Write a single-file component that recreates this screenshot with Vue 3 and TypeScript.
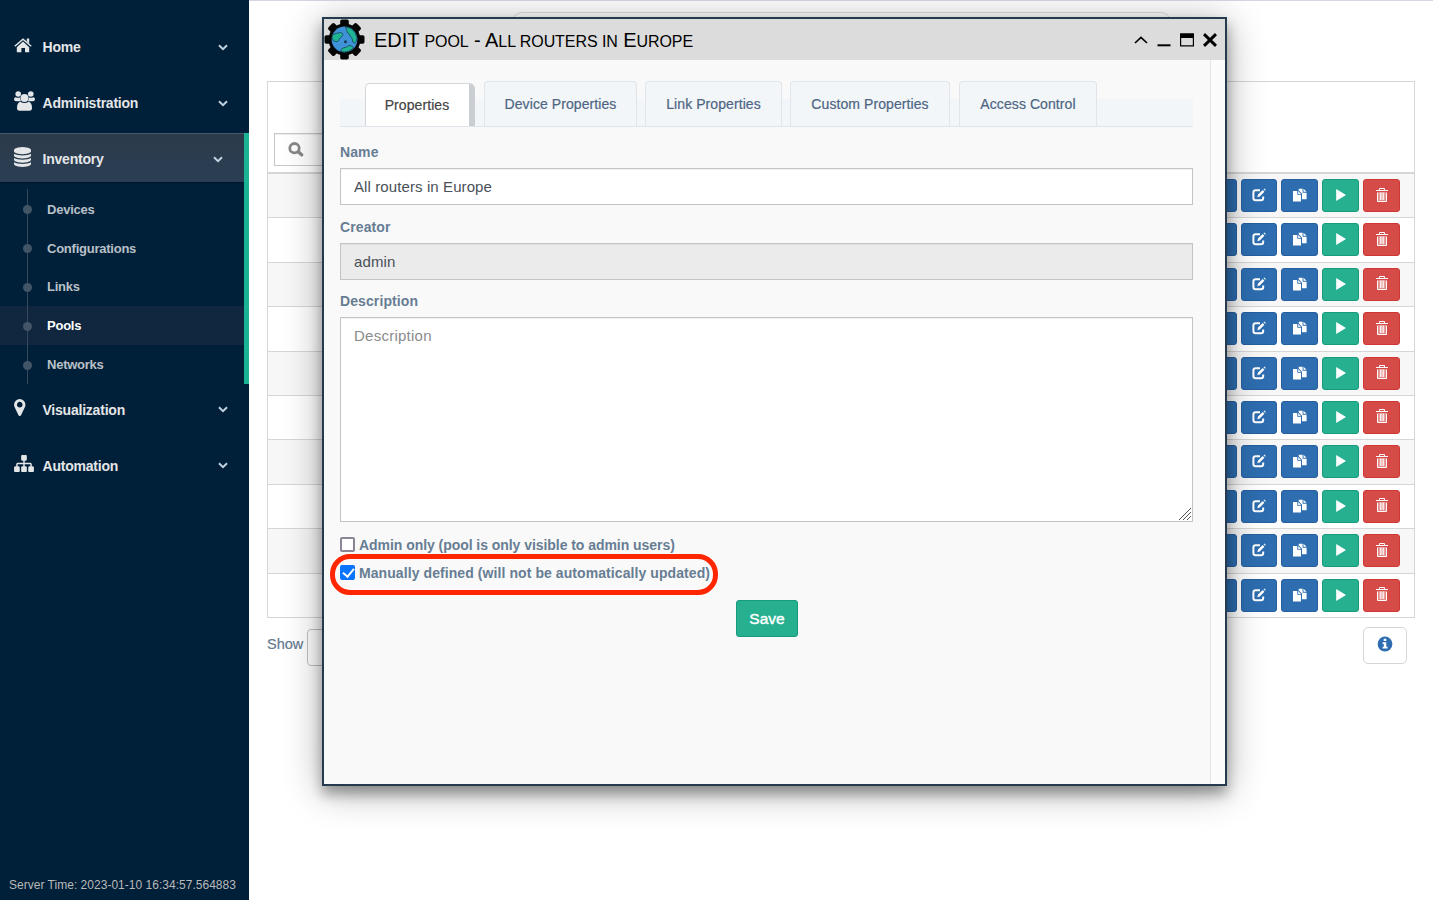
<script setup lang="ts">
import { ref } from 'vue'

interface MenuItem {
  label: string
  icon: string
  children?: string[]
}

const menu: MenuItem[] = [
  { label: 'Home', icon: 'home' },
  { label: 'Administration', icon: 'users' },
  { label: 'Inventory', icon: 'database', children: ['Devices', 'Configurations', 'Links', 'Pools', 'Networks'] },
  { label: 'Visualization', icon: 'marker' },
  { label: 'Automation', icon: 'sitemap' },
]
const activePage = 'Pools'
const tabs = [
  { label: 'Properties', key: 'properties' },
  { label: 'Device Properties', key: 'device' },
  { label: 'Link Properties', key: 'link' },
  { label: 'Custom Properties', key: 'custom' },
  { label: 'Access Control', key: 'access' },
]
const activeTab = ref('properties')
const name = ref('All routers in Europe')
const creator = ref('admin')
const description = ref('')
const adminOnly = ref(false)
const manual = ref(true)
const rows = 10
const teeth = [0, 45, 90, 135, 180, 225, 270, 315]
</script>

<template>
  <div class="page">
    <aside class="sidebar">
      <nav class="menu">
        <div v-for="item in menu" :key="item.label" class="group" :class="{ open: item.children }">
          <div class="item">
            <span class="item-icon">
              <svg v-if="item.icon === 'home'" class="i-home" viewBox="0 0 18 15">
                <path d="M9 3.6 15.2 9.2V14.3H11V10H7.4V14.3H2.8V9.2Z" />
                <path d="M.8 8.2 9 1.2 17.2 8.2" class="stroke" />
                <path d="M12.8.6H15.2V5.4L12.8 3.3Z" />
              </svg>
              <svg v-else-if="item.icon === 'users'" class="i-users" viewBox="0 0 21 20">
                <circle cx="4.2" cy="3" r="2.8" />
                <circle cx="16.8" cy="3" r="2.8" />
                <path d="M1.7 6.2Q4 7.4 6.2 6.3 5.7 8.8 7 10.2H2.2Q0 10.2 0 8.3 0 6.2 1.7 6.2ZM19.3 6.2Q17 7.4 14.8 6.3 15.3 8.8 14 10.2H18.8Q21 10.2 21 8.3 21 6.2 19.3 6.2Z" />
                <circle cx="10.5" cy="7" r="4" />
                <path d="M6.3 10.8Q10.5 13.2 14.7 10.8 18 11.5 18 17 18 19.8 15.4 19.8H5.6Q3 19.8 3 17 3 11.5 6.3 10.8Z" />
              </svg>
              <svg v-else-if="item.icon === 'database'" class="i-db" viewBox="0 0 1536 1792">
                <path d="M768 768q237 0 443-43t325-127v170q0 69-103 128t-280 93.5-385 34.5-385-34.5-280-93.5-103-128v-170q119 84 325 127t443 43zm0 768q237 0 443-43t325-127v170q0 69-103 128t-280 93.5-385 34.5-385-34.5-280-93.5-103-128v-170q119 84 325 127t443 43zm0-384q237 0 443-43t325-127v170q0 69-103 128t-280 93.5-385 34.5-385-34.5-280-93.5-103-128v-170q119 84 325 127t443 43zm0-1152q208 0 385 34.5t280 93.5 103 128v128q0 69-103 128t-280 93.5-385 34.5-385-34.5-280-93.5-103-128v-128q0-69 103-128t280-93.5 385-34.5z" />
              </svg>
              <svg v-else-if="item.icon === 'marker'" class="i-marker" viewBox="0 128 1024 1536">
                <path d="M768 640q0-106-75-181t-181-75-181 75-75 181 75 181 181 75 181-75 75-181zm256 0q0 109-33 179l-364 774q-16 33-47.5 52t-67.5 19-67.5-19-46.5-52l-365-774q-33-70-33-179 0-212 150-362t362-150 362 150 150 362z" />
              </svg>
              <svg v-else class="i-sitemap" viewBox="0 128 1792 1536">
                <path d="M1792 1248v320q0 40-28 68t-68 28h-320q-40 0-68-28t-28-68v-320q0-40 28-68t68-28h96v-192h-512v192h96q40 0 68 28t28 68v320q0 40-28 68t-68 28h-320q-40 0-68-28t-28-68v-320q0-40 28-68t68-28h96v-192h-512v192h96q40 0 68 28t28 68v320q0 40-28 68t-68 28h-320q-40 0-68-28t-28-68v-320q0-40 28-68t68-28h96v-192q0-52 38-90t90-38h512v-192h-96q-40 0-68-28t-28-68v-320q0-40 28-68t68-28h320q40 0 68 28t28 68v320q0 40-28 68t-68 28h-96v192h512q52 0 90 38t38 90v192h96q40 0 68 28t28 68z" />
              </svg>
            </span>
            <span class="item-label">{{ item.label }}</span>
            <svg class="chev" viewBox="0 0 10 7"><path d="M1 1.2 5 5.1 9 1.2" /></svg>
          </div>
          <ul v-if="item.children" class="children">
            <li v-for="c in item.children" :key="c" :class="{ current: c === activePage }">
              <i class="dot"></i><span>{{ c }}</span>
            </li>
          </ul>
        </div>
      </nav>
      <div class="server-time"><span>Server Time: 2023-01-10 16:34:57.564883</span></div>
    </aside>

    <main class="content">
      <div class="top-box"></div>
      <section class="table">
        <div class="thead">
          <div class="search">
            <svg viewBox="0 0 16 15"><circle cx="6.5" cy="6.2" r="4.7" /><path d="M10.2 9.8 13.6 12.8" /></svg>
          </div>
        </div>
        <div v-for="n in rows" :key="n" class="row" :class="{ odd: n % 2 === 1 }">
          <button class="btn blue"></button>
          <button class="btn blue">
            <svg viewBox="0 0 14 14">
              <path class="line" d="M8 2.3H3.6Q1.4 2.3 1.4 4.5V10Q1.4 12.2 3.6 12.2H9Q11.2 12.2 11.2 10V8.6" />
              <path d="M5.3 9.3 6 6.6 10.7 2 12.4 3.7 7.8 8.5ZM11.5 1.2 12.4.5 13.8 1.9 13.1 2.8Z" />
            </svg>
          </button>
          <button class="btn blue">
            <svg viewBox="0 0 14 14">
              <path d="M0 3H4.3V6.8H8V13.5H0ZM5.2 3 8 5.9H5.2Z" />
              <path d="M5.7.7H9.6V4.7H13.6V11.3H9V5.7L5.7 2.3ZM10.5.7 13.6 3.8H10.5Z" />
            </svg>
          </button>
          <button class="btn green">
            <svg viewBox="0 0 14 14"><path d="M2.2 1 12 7 2.2 13Z" /></svg>
          </button>
          <button class="btn red">
            <svg viewBox="0 0 14 16">
              <path class="soft" d="M3 5H11V14H3Z" />
              <path class="thin" d="M1 3.5H13M4.5 3V1.5H9.5V3M2.5 5.5V14.5H11.5V5.500M5.300 5.500V13M7 5.500V13M8.700 5.500V13" />
            </svg>
          </button>
        </div>
      </section>
      <footer class="tfoot">
        <span class="show">Show</span>
        <div class="page-size"></div>
        <button class="info">
          <svg viewBox="0 0 16 16">
            <circle cx="8" cy="8" r="7.4" />
            <path d="M6.7 2.7H9.3V5H6.7ZM5.6 6.2H9.3V10.8H10.5V12.6H5.6V10.8H6.8V8H5.6Z" />
          </svg>
        </button>
      </footer>
    </main>

    <section class="panel">
      <header class="panel-head">
        <svg class="logo" viewBox="-21 -21 42 42">
          <rect v-for="t in teeth" :key="t" x="-4.4" y="-20.5" width="8.8" height="10" rx="1.8" :transform="`rotate(${t})`" />
          <circle r="16.3" />
          <circle r="13.2" class="ocean" />
          <path class="land" d="M1 -12.6Q7 -12.4 10.500 -7.500L12.900 -1.500Q12 3 10.500 3.800 7.500 3 8 -.5 6 -3.200 4.500 -6 1.800 -7 2.500 -9.300ZM-12 -5Q-8.500 -6.500 -4.500 -7 -1 -7 -1.800 -4.200 -3 -2.500 -5.300 -1 -5.800 3 -9.500 2 -12 2 -12.800 -1.800ZM-3.800 12.200Q-3.600 9.500 -1.500 8.700 2.500 8.200 4.500 6.200 7.500 5.500 9.300 8.700 5 13 -.5 12.900Z" />
          <circle cx="1" cy="2.3" r="1.6" class="dark" />
        </svg>
        <h1>EDIT <small>pool</small> - A<small>ll routers in</small> E<small>urope</small></h1>
        <div class="controls">
          <svg viewBox="0 0 14 14"><path d="M1 10 7 4.3 13 10" class="c15" /></svg>
          <svg viewBox="0 0 14 14"><path d="M.5 12.3H13.5" class="c2" /></svg>
          <svg viewBox="0 0 14 14"><path d="M.6 1H13.4V12.9H.6Z" class="c1" /><path d="M.3.5H13.7V5H.3Z" class="fill" /></svg>
          <svg viewBox="0 0 14 14"><path d="M1 1.2 13 12.8M13 1.2 1 12.8" class="c3" /></svg>
        </div>
      </header>
      <div class="panel-body">
        <div class="form">
          <div class="tabs">
            <button v-for="t in tabs" :key="t.key" class="tab" :class="[t.key, { active: activeTab === t.key }]" @click="activeTab = t.key">
              <span>{{ t.label }}</span>
            </button>
          </div>
          <label class="lbl first">Name</label>
          <input v-model="name" class="field" type="text" />
          <label class="lbl">Creator</label>
          <input v-model="creator" class="field readonly" type="text" readonly />
          <label class="lbl short">Description</label>
          <div class="area-wrap">
            <textarea v-model="description" class="field area" placeholder="Description"></textarea>
            <svg class="grip" viewBox="0 0 14 14"><path d="M1 13 13 1M5 13 13 5M9 13 13 9" /></svg>
          </div>
          <label class="check"><input v-model="adminOnly" type="checkbox" /><span class="t1">Admin only (pool is only visible to admin users)</span></label>
          <label class="check second"><input v-model="manual" type="checkbox" /><span class="t2">Manually defined (will not be automatically updated)</span><i class="ring"></i></label>
          <button class="save">Save</button>
        </div>
        <div class="gutter"></div>
      </div>
    </section>
  </div>
</template>

<style>
body { margin: 0; overflow: hidden; background: #fff; }
</style>

<style scoped>
* { box-sizing: border-box; }
.page { position: relative; display: flex; width: 1433px; height: 900px; overflow: hidden; font-family: "Liberation Sans", Arial, sans-serif; font-size: 14px; color: #495057; }
button, input, textarea { font-family: inherit; }
svg { display: block; }

.sidebar { width: 249px; height: 900px; background: #001f38; display: flex; flex-direction: column; justify-content: space-between; color: #e4e6e8; }
.menu { padding-top: 21px; }
.group { margin-bottom: 6px; }
.item { display: flex; align-items: center; height: 50px; padding: 2px 21px 0 14px; }
.item-icon { width: 28.5px; height: 22px; display: flex; align-items: center; }
.item-icon svg { fill: #e4e6e8; flex: none; }
.item-icon .stroke { fill: none; stroke: #e4e6e8; stroke-width: 1.5; }
.i-home { width: 18px; height: 15px; margin-top: -4px; }
.i-users { width: 21px; height: 20px; margin-top: -4px; }
.i-db { width: 17px; height: 20px; margin-top: -4px; }
.i-marker { width: 11.5px; height: 17px; margin-top: -4px; }
.i-sitemap { width: 20px; height: 17px; margin-top: -4px; }
.item-label { flex: 1; font-weight: 700; font-size: 14px; letter-spacing: -.22px; white-space: nowrap; }
.chev { width: 10px; height: 7px; margin-right: .5px; }
.chev path { fill: none; stroke: #c3d3e2; stroke-width: 2; }
.open { border-right: 5px solid #1ab394; margin-bottom: 0; }
.open .item { background: linear-gradient(#2c3a4a, #2a3f54); border-top: 1px solid #45576a; border-bottom: 1px solid #00162a; }
.children { list-style: none; margin: 0; padding: 7px 0 0; position: relative; }
.children::before { content: ""; position: absolute; left: 27px; top: 6px; bottom: 0; width: 1px; background: #35495d; }
.children li { display: flex; align-items: center; height: 38.8px; padding-left: 23px; color: #b9c0c8; font-size: 13px; font-weight: 700; letter-spacing: -.24px; }
.children li.current { background: #10273f; color: #fff; }
.dot { position: relative; width: 9px; height: 9px; border-radius: 50%; background: #425567; margin: 1px 15px 0 0; }
.server-time { padding: 0 0 8px 9px; font-size: 12px; line-height: 14px; color: #b9b9b9; letter-spacing: .02px; white-space: nowrap; }

.content { flex: 1; height: 900px; border-top: 1px solid #d2d7e2; padding: 11px 18px 0; background: #fff; }
.top-box { width: 659px; height: 34px; margin-left: 245px; border: 1px solid #dcdcdc; border-radius: 10px; }
.table { margin-top: 35px; width: 1148px; border: 1px solid #d6d6d6; border-bottom: 0; }
.thead { height: 92px; border-bottom: 2px solid #d6d6d6; padding: 51px 6px 0; }
.search { width: 200px; height: 33px; border: 1px solid #c8c8c8; padding: 8px 13px; box-shadow: inset 0 1px 1px rgba(0, 0, 0, .07); }
.search svg { width: 16px; height: 15px; }
.search circle, .search path { fill: none; stroke: #888; stroke-width: 2.8; }
.search path { stroke-width: 3.4; stroke-linecap: round; }
.row { height: 44.4px; border-bottom: 1px solid #d6d6d6; display: flex; justify-content: flex-end; padding: 5px 14.3px 0 0; gap: 4px; }
.row.odd { background: #f7f7f7; }
.btn { width: 36.75px; height: 33px; border: 1px solid; border-radius: 3px; padding: 0; display: flex; align-items: center; justify-content: center; }
.btn svg { width: 14px; height: 14px; fill: #fff; margin-top: -1px; }
.btn .line { fill: none; stroke: #fff; stroke-width: 2; }
.btn .thin { fill: none; stroke: #fff; stroke-width: 1; }
.btn .soft { fill: #fff; opacity: .35; }
.blue { background: #2d6db0; border-color: #265f9e; }
.green { background: #26b090; border-color: #169b7b; }
.red { background: #d54b48; border-color: #d03733; }
.red svg { height: 16px; margin: -2px 0 0 1px; }
.tfoot { display: flex; align-items: flex-start; padding-top: 9px; height: 50px; }
.show { width: 40px; padding-top: 8px; font-size: 14.5px; color: #64798f; line-height: 19px; -webkit-text-stroke: .2px; }
.page-size { width: 70px; height: 37px; margin-top: 2px; border: 1px solid #c2c2c2; border-radius: 4px; }
.info { width: 44px; height: 37px; margin-left: auto; margin-right: 8px; background: #fff; border: 1px solid #d6d6d6; border-radius: 5px; padding: 0; display: flex; justify-content: center; align-items: center; }
.info svg { width: 16px; height: 16px; margin-top: -2px; }
.info circle { fill: #2d6db0; }
.info path { fill: #fff; }

.panel { position: absolute; left: 322px; top: 17px; width: 905px; height: 769px; border: 2px solid #263a4f; background: #f9f9f9; display: flex; flex-direction: column; box-shadow: 0 8px 12px rgba(0, 0, 0, .32), 0 5px 36px rgba(0, 0, 0, .32); }
.panel-head { height: 41px; flex: none; background: #dcdcdc; display: flex; align-items: center; color: #000; }
.logo { width: 41px; height: 41px; flex: none; }
.logo rect, .logo circle { fill: #050505; }
.logo .ocean { fill: #3f92d8; }
.logo .land { fill: #1fb593; stroke: #12324a; stroke-width: .7; }
.logo .dark { fill: #173c5c; }
h1 { margin: 2px 0 0 9px; font-size: 20px; line-height: 24px; font-weight: 400; letter-spacing: -.07px; white-space: nowrap; flex: 1; }
h1 small { font-size: 16px; text-transform: uppercase; }
.controls { display: flex; gap: 9px; margin-right: 8px; }
.controls svg { width: 14px; height: 14px; }
.controls path { fill: none; stroke: #000; }
.controls .c1 { stroke-width: 1.2; }
.controls .c15 { stroke-width: 1.7; }
.controls .c2 { stroke-width: 2; }
.controls .c3 { stroke-width: 3; }
.controls .fill { fill: #000; stroke: none; }
.panel-body { flex: 1; display: flex; }
.form { width: 886px; padding: 21px 17px 0 16px; display: flex; flex-direction: column; align-items: flex-start; }
.gutter { flex: 1; background: #fbfbfb; border-left: 1px solid #e2e4e6; }
.tabs { width: 853px; height: 46px; display: flex; align-items: flex-start; padding-left: 25px; background: linear-gradient(#f9f9f9 18px, #f2f6f9 18px); border-bottom: 1px solid #e0e4ea; flex: none; }
.tab { height: 45px; margin-right: 8px; padding: 0; border: 1px solid #e0e5eb; border-bottom: 0; border-radius: 4px 4px 0 0; background: #f2f6f9; color: #4d6582; font-size: 14px; letter-spacing: .08px; white-space: nowrap; -webkit-text-stroke: .2px; }
.tab.active { width: 110px; height: 43px; margin: 2px 9px 0 0; padding-right: 1px; color: #444; background: #fff; border: 1px solid #d3d6da; border-bottom: 0; border-right: 6px solid #cacdd2; border-radius: 5px 6px 0 0; }
.tab.device { width: 153px; }
.tab.link { width: 137px; }
.tab.custom { width: 160px; margin-right: 9px; }
.tab.access { width: 138px; margin-right: 0; }
.lbl { height: 38px; padding-top: 12px; line-height: 20px; font-size: 14px; font-weight: 700; letter-spacing: .1px; color: #677d93; flex: none; }
.lbl.first { height: 41px; padding-top: 15px; }
.lbl.short { height: 37px; padding-top: 11px; }
.field { width: 853px; height: 37px; flex: none; margin: 0; border: 1px solid #c4c4c4; border-radius: 0; background: #fff; padding: 0 13px; font-size: 15px; letter-spacing: .1px; color: #495057; outline: 0; box-shadow: inset 0 1px 1px rgba(0, 0, 0, .06); }
.readonly { background: #ebebeb; }
.area-wrap { position: relative; height: 205px; flex: none; }
.area { display: block; height: 205px; padding: 9px 13px; letter-spacing: .25px; resize: none; }
.area::placeholder { color: #8b8b8b; }
.grip { position: absolute; right: 1px; bottom: 1px; width: 14px; height: 14px; }
.grip path { fill: none; stroke: #555; stroke-width: 1; }
.check { position: relative; display: flex; align-items: center; height: 28px; margin-top: 9px; font-size: 14px; font-weight: 700; color: #677d93; white-space: nowrap; }
.check input { appearance: none; position: relative; width: 15px; height: 15px; margin: -2px 4px 0 0; border: 2px solid #8b8595; border-radius: 2px; background: #fff; }
.check input:checked { background: #0a74ff; border-color: #0a74ff; }
.check input:checked::after { content: ""; position: absolute; left: 3px; top: -1px; width: 5px; height: 9px; border: solid #fff; border-width: 0 2px 2px 0; transform: rotate(40deg); }
.t1 { letter-spacing: -.05px; }
.t2 { letter-spacing: .08px; }
.second { margin-top: 0; }
.ring { position: absolute; left: -10px; top: -5px; width: 388px; height: 41px; border: 5px solid #ff2600; border-radius: 20px; }
.save { align-self: flex-start; margin: 13px 0 0 396px; width: 62px; height: 37px; border: 1px solid #169b7b; border-radius: 3px; background: #26b090; color: #fff; font-size: 15.5px; font-weight: 400; -webkit-text-stroke: .4px #fff; padding: 0; }
</style>
